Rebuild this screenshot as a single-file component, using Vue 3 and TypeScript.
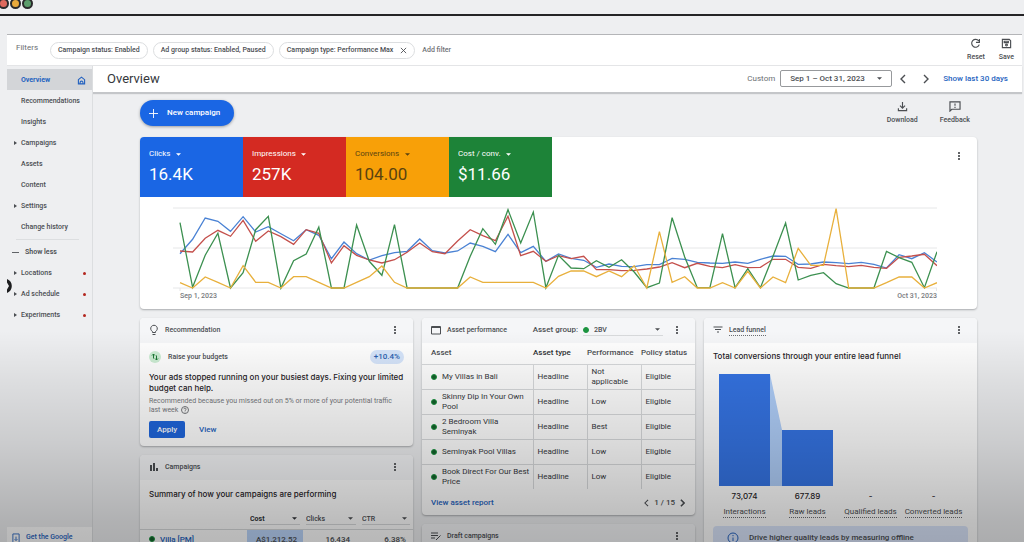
<script setup lang="ts">
import { ref } from 'vue'

interface NavItem {
  label: string
  expandable?: boolean
  alert?: boolean
  active?: boolean
}

interface Metric {
  label: string
  value: string
  tone: string
}

interface Series {
  name: string
  tone: string
  values: number[]
}

interface Asset {
  name: string
  performance: string
}

const chips: { text: string; removable: boolean }[] = [
  { text: 'Campaign status: Enabled', removable: false },
  { text: 'Ad group status: Enabled, Paused', removable: false },
  { text: 'Campaign type: Performance Max', removable: true },
]

const mainNav: NavItem[] = [
  { label: 'Overview', active: true },
  { label: 'Recommendations' },
  { label: 'Insights' },
  { label: 'Campaigns', expandable: true },
  { label: 'Assets' },
  { label: 'Content' },
  { label: 'Settings', expandable: true },
  { label: 'Change history' },
]

const moreNav: NavItem[] = [
  { label: 'Locations', expandable: true, alert: true },
  { label: 'Ad schedule', expandable: true, alert: true },
  { label: 'Experiments', expandable: true, alert: true },
]

const metrics: Metric[] = [
  { label: 'Clicks', value: '16.4K', tone: 'blue' },
  { label: 'Impressions', value: '257K', tone: 'red' },
  { label: 'Conversions', value: '104.00', tone: 'amber' },
  { label: 'Cost / conv.', value: '$11.66', tone: 'green' },
]

// Daily values, one per day from Sep 1 to Oct 31, on a 0-240 scale.
const series: Series[] = [
  {
    name: 'Clicks',
    tone: 'blue',
    values: [
      103, 146, 210, 200, 170, 214, 168, 184, 163, 142, 175, 158, 88, 138, 103, 84, 97, 106, 110, 147, 112, 105, 111,
      135, 125, 109, 161, 106, 125, 80, 102, 89, 83, 62, 72, 65, 64, 70, 70, 89, 86, 77, 75, 74, 78, 74, 86, 96, 95, 71,
      72, 78, 76, 73, 77, 71, 60, 100, 88, 106, 78,
    ],
  },
  {
    name: 'Impressions',
    tone: 'red',
    values: [
      111, 108, 149, 173, 155, 203, 140, 171, 154, 131, 175, 164, 75, 127, 98, 84, 75, 85, 107, 135, 109, 103, 141, 175,
      157, 142, 215, 97, 110, 80, 97, 88, 95, 55, 55, 52, 53, 57, 63, 76, 61, 74, 65, 61, 70, 61, 62, 86, 86, 62, 59,
      71, 67, 64, 68, 62, 59, 92, 96, 101, 67,
    ],
  },
  {
    name: 'Cost / conv.',
    tone: 'green',
    values: [
      196, 2, 98, 164, 0, 46, 175, 215, 0, 82, 102, 183, 0, 0, 189, 80, 38, 190, 0, 0, 0, 0, 0, 95, 178, 131, 235, 135,
      228, 1, 98, 60, 58, 82, 62, 85, 48, 1, 15, 211, 93, 1, 1, 163, 1, 58, 1, 95, 195, 24, 38, 46, 13, 0, 0, 0, 110,
      91, 77, 1, 109,
    ],
  },
  {
    name: 'Conversions',
    tone: 'amber',
    values: [
      16, 0, 33, 17, 0, 67, 17, 17, 0, 34, 34, 17, 0, 0, 17, 34, 66, 17, 0, 0, 0, 0, 0, 33, 17, 17, 17, 17, 17, 0, 35,
      51, 51, 34, 51, 34, 67, 0, 169, 17, 34, 0, 0, 16, 0, 50, 0, 33, 16, 119, 68, 68, 238, 0, 0, 0, 16, 33, 33, 0, 16,
    ],
  },
]

function toPoints(values: number[]): string {
  const step = 757 / (values.length - 1)
  return values.map((v, i) => `${(7 + i * step).toFixed(1)},${(81 - v / 3).toFixed(1)}`).join(' ')
}

const assets: Asset[] = [
  { name: 'My Villas in Bali', performance: 'Not applicable' },
  { name: 'Skinny Dip In Your Own Pool', performance: 'Low' },
  { name: '2 Bedroom Villa Seminyak', performance: 'Best' },
  { name: 'Seminyak Pool Villas', performance: 'Low' },
  { name: 'Book Direct For Our Best Price', performance: 'Low' },
]

const funnel: { value: string; label: string }[] = [
  { value: '73,074', label: 'Interactions' },
  { value: '677.89', label: 'Raw leads' },
  { value: '-', label: 'Qualified leads' },
  { value: '-', label: 'Converted leads' },
]

const summaryColumns: string[] = ['Cost', 'Clicks', 'CTR']

const dateRange = ref('Sep 1 – Oct 31, 2023')
const assetGroup = ref('2BV')
</script>

<template>
  <div class="page">
    <div class="titlebar">
      <span class="light close"></span>
      <span class="light minimise"></span>
      <span class="light expand"></span>
    </div>

    <div class="app">
      <div class="filters">
        <span class="filters-label">Filters</span>
        <button v-for="chip in chips" :key="chip.text" class="chip" type="button">
          {{ chip.text }}
          <svg v-if="chip.removable" class="chip-x" viewBox="0 0 8 8"><path d="M1 1l6 6M7 1L1 7" /></svg>
        </button>
        <button class="add-filter" type="button">Add filter</button>
        <button class="tool push" type="button">
          <svg class="tool-icon" viewBox="0 0 24 24">
            <path d="M19 6.500A8.500 8.500 0 1 0 20.200 14.500M20.500 2v7.500H13" />
          </svg>
          Reset
        </button>
        <button class="tool" type="button">
          <svg class="tool-icon" viewBox="0 0 24 24">
            <path d="M3 3h15l3 3v15H3z" />
            <path d="M7 7h9v3H7z" />
            <circle cx="12" cy="15.500" r="2" />
          </svg>
          Save
        </button>
      </div>

      <div class="body">
        <nav class="sidebar">
          <a v-for="item in mainNav" :key="item.label" href="#" class="nav-item" :class="{ active: item.active }">
            <svg v-if="item.expandable" class="nav-arrow" viewBox="0 0 3 4"><path d="M0 0l3 2-3 2z" /></svg>
            {{ item.label }}
            <svg v-if="item.active" class="home" viewBox="0 0 16 16">
              <path d="M2.500 6.500L8 2l5.500 4.500V14h-11z" />
              <path d="M5.500 14v-2.500a2.500 2.500 0 0 1 5 0V14" />
            </svg>
          </a>
          <div class="nav-rule"></div>
          <button class="show-less" type="button"><span class="dash"></span>Show less</button>
          <a v-for="item in moreNav" :key="item.label" href="#" class="nav-item">
            <svg class="nav-arrow" viewBox="0 0 3 4"><path d="M0 0l3 2-3 2z" /></svg>
            {{ item.label }}
            <span v-if="item.alert" class="alert-dot"></span>
          </a>
          <svg class="handle" viewBox="0 0 5 14">
            <path class="handle-disc" d="M0 0Q4.800 2 4.800 7T0 14V10.500L2 7 0 3.500z" />
          </svg>
          <a href="#" class="promo">
            <svg class="promo-icon" viewBox="0 0 9 10"><path d="M1 10V1h7v9M4.500 4v4M3 7l1.500 1.500L6 7" /></svg>
            Get the Google
          </a>
        </nav>

        <main class="main">
          <header class="heading">
            <h1>Overview</h1>
            <label class="custom" for="date-range">Custom</label>
            <span class="date-box">
              <select id="date-range" v-model="dateRange">
                <option>Sep 1 – Oct 31, 2023</option>
              </select>
              <svg class="caret" viewBox="0 0 6 3"><path d="M0 0h6L3 3z" /></svg>
            </span>
            <button class="step" type="button" aria-label="Previous period">
              <svg viewBox="0 0 6 10"><path d="M5 1L1 5l4 4" /></svg>
            </button>
            <button class="step" type="button" aria-label="Next period">
              <svg viewBox="0 0 6 10"><path d="M1 1l4 4-4 4" /></svg>
            </button>
            <a href="#" class="last-days">Show last 30 days</a>
          </header>

          <div class="content">
            <div class="actions">
              <button class="new-campaign" type="button">
                <svg viewBox="0 0 10 10"><path d="M5 0v10M0 5h10" /></svg>
                New campaign
              </button>
              <button class="tool push" type="button">
                <svg class="tool-icon" viewBox="0 0 24 24">
                  <path d="M12 2v13M6.500 10l5.500 5.500 5.500-5.500M3 16v5h18v-5" />
                </svg>
                Download
              </button>
              <button class="tool" type="button">
                <svg class="tool-icon wide" viewBox="0 0 26 24">
                  <path d="M2 22V2h22v16H6z" />
                  <path d="M13 5.500v5M13 12.500v2.500" />
                </svg>
                Feedback
              </button>
            </div>

            <section class="card overview">
              <div class="metrics">
                <div v-for="m in metrics" :key="m.label" class="metric" :class="m.tone">
                  <span class="metric-pick">
                    <select :aria-label="m.label">
                      <option>{{ m.label }}</option>
                    </select>
                    <svg class="caret" viewBox="0 0 6 3"><path d="M0 0h6L3 3z" /></svg>
                  </span>
                  <span class="metric-value">{{ m.value }}</span>
                </div>
                <button class="kebab" type="button" aria-label="More options"><i></i><i></i><i></i></button>
              </div>
              <div class="chart">
                <svg class="plot" viewBox="0 0 764 84" preserveAspectRatio="none">
                  <path class="grid" d="M0 1h764M0 41h764M0 81h764M7 81v3M763.500 81v3" />
                  <polyline
                    v-for="s in series"
                    :key="s.name"
                    class="line"
                    :class="s.tone"
                    :points="toPoints(s.values)"
                  />
                </svg>
                <div class="axis"><span>Sep 1, 2023</span><span>Oct 31, 2023</span></div>
              </div>
            </section>

            <div class="columns">
              <div class="column">
                <section class="card">
                  <header class="card-head">
                    <svg class="head-icon" viewBox="0 0 10 12">
                      <path d="M3.500 8.500V7.500a3.300 3.300 0 1 1 3 0v1zM3.500 10.500h3" />
                    </svg>
                    <h2>Recommendation</h2>
                    <button class="kebab" type="button" aria-label="More options"><i></i><i></i><i></i></button>
                  </header>
                  <div class="advice">
                    <div class="advice-top">
                      <svg class="raise" viewBox="0 0 12 12">
                        <circle cx="6" cy="6" r="6" />
                        <path d="M4.500 7.500V3M3 4.500L4.500 3 6 4.500M7.500 4.500V9M6 7.500L7.500 9 9 7.500" />
                      </svg>
                      <span>Raise your budgets</span>
                      <span class="uplift">+10.4%</span>
                    </div>
                    <h3>Your ads stopped running on your busiest days. Fixing your limited budget can help.</h3>
                    <p>
                      Recommended because you missed out on 5% or more of your potential traffic last week
                      <svg class="help" viewBox="0 0 8 8">
                        <circle cx="4" cy="4" r="3.500" />
                        <path d="M2.900 3.200a1.100 1.100 0 1 1 1.600 1Q4 4.400 4 5M4 5.600v.7" />
                      </svg>
                    </p>
                    <div class="advice-actions">
                      <button class="apply" type="button">Apply</button>
                      <a href="#" class="blue-link">View</a>
                    </div>
                  </div>
                </section>

                <section class="card">
                  <header class="card-head">
                    <svg class="head-icon solid" viewBox="0 0 10 12">
                      <path d="M1 4h2v6H1zM4 2h2v8H4zM7 7h2v3H7z" />
                    </svg>
                    <h2>Campaigns</h2>
                    <button class="kebab" type="button" aria-label="More options"><i></i><i></i><i></i></button>
                  </header>
                  <h3 class="summary-title">Summary of how your campaigns are performing</h3>
                  <table class="summary">
                    <thead>
                      <tr>
                        <th></th>
                        <th v-for="c in summaryColumns" :key="c">
                          <span class="pick">
                            <select :aria-label="c">
                              <option>{{ c }}</option>
                            </select>
                            <svg class="caret" viewBox="0 0 6 3"><path d="M0 0h6L3 3z" /></svg>
                          </span>
                        </th>
                      </tr>
                    </thead>
                    <tbody>
                      <tr>
                        <td><span class="status"></span><a href="#">Villa [PM]</a></td>
                        <td class="hot">A$1,212.52</td>
                        <td>16,434</td>
                        <td>6.38%</td>
                      </tr>
                    </tbody>
                  </table>
                </section>
              </div>

              <div class="column">
                <section class="card">
                  <header class="card-head">
                    <svg class="head-icon" viewBox="0 0 10 12">
                      <path d="M.5 2.500h9v7.500h-9zM.5 3.500h9" />
                    </svg>
                    <h2>Asset performance</h2>
                    <label class="group-label" for="asset-group">Asset group:</label>
                    <span class="pick group">
                      <span class="status plain"></span>
                      <select id="asset-group" v-model="assetGroup">
                        <option>2BV</option>
                      </select>
                      <svg class="caret" viewBox="0 0 6 3"><path d="M0 0h6L3 3z" /></svg>
                    </span>
                    <button class="kebab" type="button" aria-label="More options"><i></i><i></i><i></i></button>
                  </header>
                  <table class="assets">
                    <thead>
                      <tr>
                        <th>Asset</th>
                        <th class="strong">Asset type</th>
                        <th>Performance</th>
                        <th>Policy status</th>
                      </tr>
                    </thead>
                    <tbody>
                      <tr v-for="a in assets" :key="a.name">
                        <td>
                          <div class="asset-name"><span class="status"></span>{{ a.name }}</div>
                        </td>
                        <td>Headline</td>
                        <td>{{ a.performance }}</td>
                        <td>Eligible</td>
                      </tr>
                    </tbody>
                  </table>
                  <footer class="card-foot">
                    <a href="#" class="blue-link">View asset report</a>
                    <span class="pager">
                      <button type="button" aria-label="Previous page">
                        <svg viewBox="0 0 6 10"><path d="M5 1L1 5l4 4" /></svg>
                      </button>
                      1 / 15
                      <button class="next" type="button" aria-label="Next page">
                        <svg viewBox="0 0 6 10"><path d="M1 1l4 4-4 4" /></svg>
                      </button>
                    </span>
                  </footer>
                </section>

                <section class="card">
                  <header class="card-head">
                    <svg class="head-icon" viewBox="0 0 10 12">
                      <path d="M0 3h7M0 5.500h7M0 8h4M5 10l4.500-4.500" />
                    </svg>
                    <h2>Draft campaigns</h2>
                    <button class="kebab" type="button" aria-label="More options"><i></i><i></i><i></i></button>
                  </header>
                </section>
              </div>

              <div class="column">
                <section class="card">
                  <header class="card-head">
                    <svg class="head-icon" viewBox="0 0 10 12"><path d="M.5 3h9M2 5.500h6M4 8h2" /></svg>
                    <h2 class="dotted">Lead funnel</h2>
                    <button class="kebab" type="button" aria-label="More options"><i></i><i></i><i></i></button>
                  </header>
                  <div class="funnel">
                    <h3>Total conversions through your entire lead funnel</h3>
                    <svg class="funnel-chart" viewBox="0 0 252 112" preserveAspectRatio="none">
                      <path class="drop" d="M57 0l12 56v56H57z" />
                      <path class="bar" d="M6 0h51v112H6zM69 56h51v56H69z" />
                    </svg>
                    <div class="funnel-stats">
                      <div v-for="f in funnel" :key="f.label" class="stat">
                        <strong>{{ f.value }}</strong>
                        <span>{{ f.label }}</span>
                      </div>
                    </div>
                    <div class="notice">
                      <svg viewBox="0 0 12 12">
                        <circle cx="6" cy="6" r="5" />
                        <path d="M6 5.500V9M6 3v1.200" />
                      </svg>
                      <span>Drive higher quality leads by measuring offline</span>
                    </div>
                  </div>
                </section>
              </div>
            </div>
          </div>
        </main>
      </div>
    </div>
    <div class="shade"></div>
  </div>
</template>

<style>
body {
  margin: 0;
  background: #eeeff1;
}
</style>

<style scoped>
* {
  box-sizing: border-box;
}

.page {
  position: relative;
  display: flex;
  flex-direction: column;
  height: 100vh;
  overflow: hidden;
  background: #eeeff1;
  color: #4b4e52;
  font: 500 8px/10px Roboto, 'Liberation Sans', sans-serif;
}

h1,
h2,
h3,
p {
  margin: 0;
}

button,
select {
  margin: 0;
  padding: 0;
  border: 0;
  background: none;
  color: inherit;
  font: inherit;
  appearance: none;
}

a {
  color: inherit;
  text-decoration: none;
}

svg {
  display: block;
  flex: none;
  fill: none;
  stroke: currentColor;
}

.titlebar {
  display: flex;
  gap: 1px;
  flex: none;
  height: 16px;
  border-bottom: 2px solid #242426;
}

.light {
  width: 11px;
  height: 11px;
  margin-top: -2px;
  border: 2px solid #2a2a2c;
  border-radius: 50%;
}

.light.close {
  margin-left: -2px;
  background: #df6a5e;
}

.light.minimise {
  background: #e9aa3c;
}

.light.expand {
  background: #5c9d6c;
}

.app {
  display: flex;
  flex: 1;
  flex-direction: column;
  min-height: 0;
  margin: 18px 2px 0 7px;
  border-top: 1px solid #b4b5b8;
}

.filters {
  display: flex;
  align-items: center;
  flex: none;
  gap: 5px;
  height: 31px;
  padding: 0 8px 0 9px;
  border-bottom: 1px solid #e4e5e7;
  background: #fff;
}

.filters-label {
  margin: 0 7px 4px 0;
  color: #6b6e72;
  font-weight: 400;
}

.chip {
  display: flex;
  align-items: center;
  gap: 7px;
  height: 17px;
  padding: 0 7px;
  border: 1px solid #dcdee0;
  border-radius: 9px;
  font-size: 7px;
}

.chip-x {
  width: 7px;
  height: 7px;
}

.add-filter {
  margin-left: 2px;
  color: #6f7276;
  font-size: 7px;
}

.tool {
  display: flex;
  align-items: center;
  flex-direction: column;
  gap: 3px;
  font-size: 7px;
}

.tool-icon {
  width: 11px;
  height: 11px;
  stroke-width: 2.500;
}

.tool-icon.wide {
  width: 12px;
}

.push {
  margin-left: auto;
}

.filters .tool + .tool {
  margin-left: 9px;
}

.body {
  display: flex;
  flex: 1;
  min-height: 0;
}

.sidebar {
  position: relative;
  display: flex;
  flex: none;
  flex-direction: column;
  width: 86px;
  padding-top: 3px;
  border-right: 1px solid #dcdee0;
}

.nav-item {
  position: relative;
  display: flex;
  align-items: center;
  flex: none;
  height: 21px;
  padding: 1px 6px 0 14px;
  font-size: 7px;
}

.nav-item.active {
  background: #d3d5d8;
  color: #2563c0;
  font-weight: 700;
}

.nav-arrow {
  width: 3px;
  height: 4px;
  margin: 0 4px 0 -7px;
  fill: currentColor;
  stroke: none;
}

.home {
  width: 9px;
  height: 9px;
  margin-left: auto;
  stroke-width: 2;
}

.alert-dot {
  width: 3px;
  height: 3px;
  margin-left: auto;
  border-radius: 50%;
  background: #b3261e;
}

.nav-rule {
  flex: none;
  height: 1px;
  margin: 2px 13px 2px 9px;
  background: #dcdee0;
}

.show-less {
  display: flex;
  align-items: center;
  flex: none;
  gap: 6px;
  height: 20px;
  padding-left: 5px;
  font-size: 7px;
  font-weight: 600;
}

.dash {
  width: 7px;
  height: 1px;
  background: #606367;
}

.handle {
  position: absolute;
  top: 213px;
  left: 0;
  width: 5px;
  height: 14px;
}

.handle-disc {
  fill: #1d1e20;
  stroke: none;
}

.promo {
  display: flex;
  align-items: flex-end;
  gap: 6px;
  height: 15px;
  margin-top: auto;
  padding-left: 5px;
  background: #fff;
  color: #2563c0;
  font-size: 7px;
}

.promo-icon {
  width: 8px;
  height: 9px;
}

.main {
  flex: 1;
  min-width: 0;
}

.heading {
  display: flex;
  align-items: center;
  height: 27px;
  padding: 0 14px 1px;
  border-bottom: 1px solid #c4c6c9;
  background: #fff;
  box-shadow: 0 1px 1px #c4c6c9;
}

.heading h1 {
  margin-right: auto;
  color: #35383c;
  font-size: 13px;
  font-weight: 400;
  line-height: 16px;
}

.custom {
  margin-right: 5px;
  color: #6b6e72;
  font-weight: 400;
}

.date-box {
  display: flex;
  align-items: center;
  width: 112px;
  height: 17px;
  padding: 0 9px;
  border: 1px solid #97999c;
  border-radius: 2px;
}

.date-box select {
  flex: 1;
}

.caret {
  width: 5px;
  height: 3px;
  fill: currentColor;
  stroke: none;
  pointer-events: none;
}

.step {
  width: 6px;
  margin-left: 8px;
}

.step + .step {
  margin-left: 17px;
}

.step svg {
  width: 6px;
  height: 10px;
  stroke-width: 1.400;
}

.last-days {
  margin-left: 14px;
  color: #2563c0;
}

.content {
  padding: 7px 45px 0 47px;
}

.actions {
  display: flex;
  align-items: center;
  gap: 22px;
  height: 26px;
  margin-bottom: 11px;
  padding-right: 7px;
}

.new-campaign {
  display: flex;
  align-items: center;
  gap: 9px;
  height: 26px;
  padding: 0 14px 0 9px;
  border-radius: 13px;
  background: #1a66e4;
  box-shadow: 0 1px 3px #9b9da1;
  color: #fff;
}

.new-campaign svg {
  width: 9px;
  height: 9px;
}

.card {
  overflow: hidden;
  border-radius: 4px;
  background: #fff;
  box-shadow: 0 1px 2px #a9abae;
}

.metrics {
  display: flex;
}

.metric {
  display: flex;
  flex-direction: column;
  gap: 5px;
  width: 103px;
  height: 60px;
  padding: 12px 9px 0;
  color: #fff;
}

.metric.blue {
  background: #1a66e4;
}

.metric.red {
  background: #d42a22;
}

.metric.amber {
  background: #f8a008;
  color: #5a4310;
}

.metric.green {
  background: #1d8338;
}

.metric-pick {
  display: flex;
  align-items: center;
  gap: 5px;
}

.metric-pick select {
  font-weight: 400;
}

.metric-value {
  font-size: 17px;
  font-weight: 400;
  line-height: 20px;
}

.kebab {
  display: flex;
  align-items: center;
  flex-direction: column;
  gap: 1px;
  width: 6px;
  margin-left: auto;
}

.kebab i {
  width: 2px;
  height: 2px;
  border-radius: 1px;
  background: #2f3236;
}

.metrics .kebab {
  align-self: flex-start;
  margin: 15px 15px 0 auto;
}

.chart {
  padding: 10px 40px 8px 33px;
}

.plot {
  width: 100%;
  height: 84px;
}

.grid {
  stroke: #e6e7e8;
}

.line {
  stroke-width: 1.300;
  vector-effect: non-scaling-stroke;
}

.line.blue {
  stroke: #4a82d4;
}

.line.red {
  stroke: #c4504c;
}

.line.green {
  stroke: #3c9050;
}

.line.amber {
  stroke: #e8b03c;
}

.axis {
  display: flex;
  justify-content: space-between;
  padding-left: 7px;
  color: #77797d;
  font-size: 7px;
}

.columns {
  display: grid;
  grid-template-columns: repeat(3, minmax(0, 1fr));
  align-items: start;
  gap: 9px;
  margin-top: 9px;
}

.column {
  display: grid;
  gap: 9px;
}

.card-head {
  display: flex;
  align-items: center;
  height: 25px;
  padding: 0 15px 1px 9px;
  background: #f5f6f8;
}

.head-icon {
  width: 10px;
  height: 12px;
  margin-right: 6px;
}

.head-icon.solid {
  fill: currentColor;
  stroke: none;
}

.card-head h2 {
  font-size: 7px;
  font-weight: 500;
}

.card-head h2.dotted {
  border-bottom: 1px dotted #6b6e72;
}

h3 {
  color: #1f2226;
  font-family: Inter, Roboto, sans-serif;
  font-size: 8px;
  font-weight: 500;
}

.advice {
  padding: 7px 9px 8px;
}

.advice-top {
  display: flex;
  align-items: center;
  gap: 7px;
  height: 14px;
  font-size: 7px;
}

.raise {
  width: 12px;
  height: 12px;
}

.raise circle {
  fill: #cdeed4;
  stroke: none;
}

.raise path {
  stroke: #1d7a35;
}

.uplift {
  margin-left: auto;
  padding: 2px 4px;
  border-radius: 7px;
  background: #d6e5fb;
  color: #2a5fb0;
  font-size: 8px;
}

.advice h3 {
  margin-top: 8px;
  line-height: 11px;
}

.advice p {
  margin-top: 3px;
  color: #77797d;
  font-size: 7px;
  font-weight: 400;
  line-height: 9px;
}

.help {
  display: inline-block;
  width: 8px;
  height: 8px;
  margin-left: 1px;
  vertical-align: -2px;
}

.advice-actions {
  display: flex;
  align-items: center;
  gap: 14px;
  margin-top: 6px;
}

.apply {
  width: 36px;
  height: 17px;
  border-radius: 2px;
  background: #1f66dc;
  color: #fff;
}

.blue-link {
  color: #2563c0;
}

.summary-title {
  padding: 9px 9px 11px;
}

table {
  width: 100%;
  border-collapse: collapse;
  table-layout: fixed;
}

.pick {
  display: flex;
  align-items: center;
  height: 12px;
  padding-right: 3px;
  border-bottom: 1px solid #d8dadc;
}

.pick select {
  flex: 1;
  min-width: 0;
}

.summary th {
  height: 19px;
  padding: 0 3px;
  font-size: 7px;
  font-weight: 500;
}

.summary th:first-child {
  width: 107px;
}

.summary th:last-child {
  width: 54px;
}

.summary th:nth-child(2) {
  color: #2f3236;
  font-weight: 700;
}

.summary td {
  height: 21px;
  padding: 0 9px;
  border-top: 1px solid #d8dadc;
  text-align: right;
}

.summary td:last-child {
  padding-right: 7px;
}

.summary td:first-child {
  text-align: left;
}

.summary td a {
  margin-left: 5px;
  color: #2563c0;
}

.summary td.hot {
  background: #bcd6fb;
}

.status {
  display: inline-block;
  flex: none;
  width: 6px;
  height: 6px;
  border: 1px solid #1c9440;
  border-radius: 50%;
  background: #14602b;
}

.status.plain {
  background: #1c9440;
}

.group-label {
  margin-left: auto;
}

.group {
  gap: 5px;
  width: 80px;
  margin-left: 5px;
}

.group + .kebab {
  margin-left: 11px;
}

.group select {
  font-size: 7px;
}

.assets th {
  height: 21px;
  padding: 0;
  font-weight: 500;
  text-align: left;
  white-space: nowrap;
}

.assets th:first-child {
  width: 111px;
  padding-left: 9px;
}

.assets th.strong {
  color: #2f3236;
}

.assets td {
  height: 25px;
  padding: 0 4px;
  border-top: 1px solid #d8dadc;
  color: #36393d;
  font-weight: 400;
}

.assets td + td {
  border-left: 1px solid #d8dadc;
}

.assets td:first-child {
  padding: 0 0 0 9px;
}

.asset-name {
  display: flex;
  align-items: center;
  gap: 5px;
}

.card-foot {
  display: flex;
  align-items: center;
  justify-content: space-between;
  height: 26px;
  padding: 1px 10px 0 9px;
}

.pager {
  display: flex;
  align-items: center;
  gap: 5px;
}

.pager svg {
  width: 5px;
  height: 8px;
  stroke-width: 1.300;
}

.pager .next svg {
  stroke-width: 2;
}

.funnel {
  padding: 8px 9px 9px;
}

.funnel-chart {
  width: 100%;
  height: 112px;
  margin-top: 13px;
  padding-right: 3px;
}

.funnel-chart path {
  stroke: none;
}

.bar {
  fill: #3574e4;
}

.drop {
  fill: #b0cffa;
}

.funnel-stats {
  display: grid;
  grid-template-columns: repeat(4, 1fr);
  padding: 5px 3px 8px 0;
}

.stat {
  display: grid;
  justify-items: center;
  gap: 6px;
  white-space: nowrap;
}

.stat strong {
  color: #1f2226;
  font-family: Inter, Roboto, sans-serif;
  font-weight: 500;
}

.stat span {
  border-bottom: 1px dotted #6b6e72;
  font-weight: 400;
}

.notice {
  display: flex;
  align-items: center;
  gap: 10px;
  height: 24px;
  padding: 0 14px;
  border-radius: 4px;
  background: #dbe6fc;
}

.notice svg {
  width: 12px;
  height: 12px;
  color: #2563c0;
}

.shade {
  position: absolute;
  inset: 0;
  background: linear-gradient(
    transparent 61%,
    rgba(0, 0, 0, 0.07) 70%,
    rgba(0, 0, 0, 0.15) 82%,
    rgba(0, 0, 0, 0.26) 96%,
    rgba(0, 0, 0, 0.28) 100%
  );
  pointer-events: none;
}
</style>
